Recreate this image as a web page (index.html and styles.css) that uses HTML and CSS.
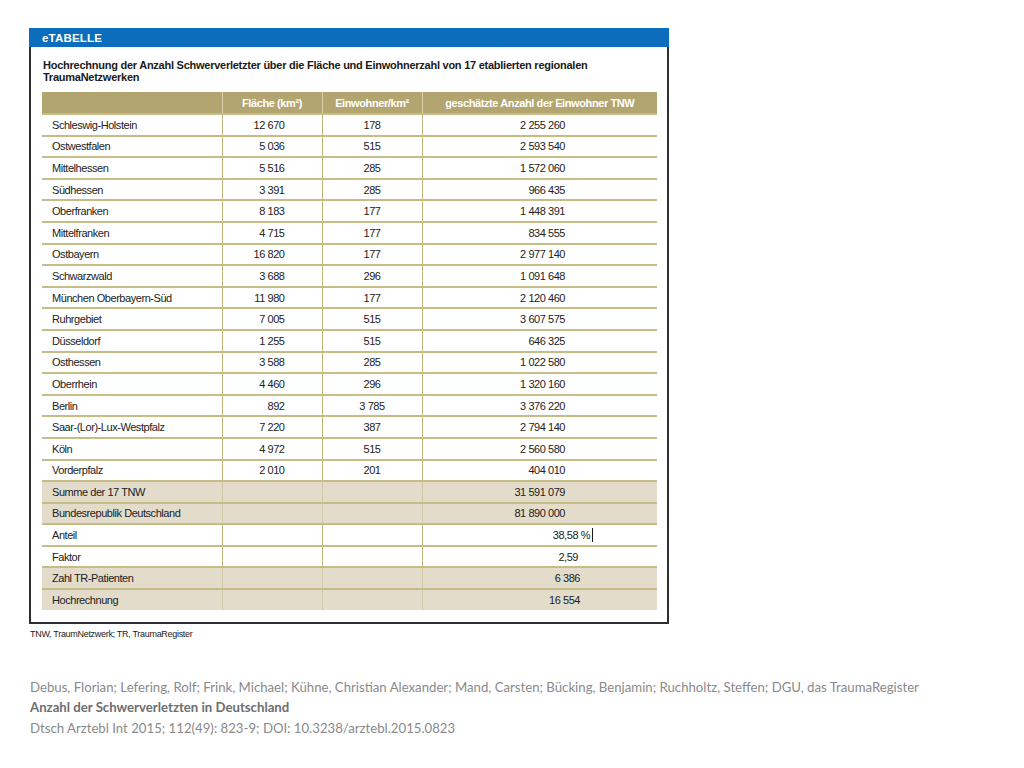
FILE: index.html
```html
<!DOCTYPE html>
<html lang="de">
<head>
<meta charset="utf-8">
<title>eTABELLE</title>
<link rel="stylesheet" href="styles.css">
</head>
<body>
<div class="page">
  <div class="figure">
    <div class="bar">eTABELLE</div>
    <div class="box">
      <h1 class="title">Hochrechnung der Anzahl Schwerverletzter über die Fläche und Einwohnerzahl von 17 etablierten regionalen TraumaNetzwerken</h1>
      <table class="data">
        <colgroup>
          <col class="c1"><col class="c2"><col class="c3"><col class="c4">
        </colgroup>
        <thead>
          <tr><th></th><th>Fläche (km²)</th><th>Einwohner/km²</th><th>geschätzte Anzahl der Einwohner TNW</th></tr>
        </thead>
        <tbody>
          <tr><td>Schleswig-Holstein</td><td class="n">12 670</td><td class="m">178</td><td class="r">2 255 260</td></tr>
          <tr><td>Ostwestfalen</td><td class="n">5 036</td><td class="m">515</td><td class="r">2 593 540</td></tr>
          <tr><td>Mittelhessen</td><td class="n">5 516</td><td class="m">285</td><td class="r">1 572 060</td></tr>
          <tr><td>Südhessen</td><td class="n">3 391</td><td class="m">285</td><td class="r">966 435</td></tr>
          <tr><td>Oberfranken</td><td class="n">8 183</td><td class="m">177</td><td class="r">1 448 391</td></tr>
          <tr><td>Mittelfranken</td><td class="n">4 715</td><td class="m">177</td><td class="r">834 555</td></tr>
          <tr><td>Ostbayern</td><td class="n">16 820</td><td class="m">177</td><td class="r">2 977 140</td></tr>
          <tr><td>Schwarzwald</td><td class="n">3 688</td><td class="m">296</td><td class="r">1 091 648</td></tr>
          <tr><td>München Oberbayern-Süd</td><td class="n">11 980</td><td class="m">177</td><td class="r">2 120 460</td></tr>
          <tr><td>Ruhrgebiet</td><td class="n">7 005</td><td class="m">515</td><td class="r">3 607 575</td></tr>
          <tr><td>Düsseldorf</td><td class="n">1 255</td><td class="m">515</td><td class="r">646 325</td></tr>
          <tr><td>Osthessen</td><td class="n">3 588</td><td class="m">285</td><td class="r">1 022 580</td></tr>
          <tr><td>Oberrhein</td><td class="n">4 460</td><td class="m">296</td><td class="r">1 320 160</td></tr>
          <tr><td>Berlin</td><td class="n">892</td><td class="m">3 785</td><td class="r">3 376 220</td></tr>
          <tr><td>Saar-(Lor)-Lux-Westpfalz</td><td class="n">7 220</td><td class="m">387</td><td class="r">2 794 140</td></tr>
          <tr><td>Köln</td><td class="n">4 972</td><td class="m">515</td><td class="r">2 560 580</td></tr>
          <tr><td>Vorderpfalz</td><td class="n">2 010</td><td class="m">201</td><td class="r">404 010</td></tr>
          <tr class="sum"><td>Summe der 17 TNW</td><td></td><td></td><td class="r">31 591 079</td></tr>
          <tr class="sum"><td>Bundesrepublik Deutschland</td><td></td><td></td><td class="r">81 890 000</td></tr>
          <tr><td>Anteil</td><td></td><td></td><td class="r r2"><span class="caret">38,58 %</span></td></tr>
          <tr><td>Faktor</td><td></td><td></td><td class="r r3">2,59</td></tr>
          <tr class="sum"><td>Zahl TR-Patienten</td><td></td><td></td><td class="r r4">6 386</td></tr>
          <tr class="sum"><td>Hochrechnung</td><td></td><td></td><td class="r r4">16 554</td></tr>
        </tbody>
      </table>
    </div>
    <p class="note">TNW, TraumNetzwerk; TR, TraumaRegister</p>
  </div>
  <div class="cite">
    <p class="authors">Debus, Florian; Lefering, Rolf; Frink, Michael; Kühne, Christian Alexander; Mand, Carsten; Bücking, Benjamin; Ruchholtz, Steffen; DGU, das TraumaRegister</p>
    <p class="ctitle">Anzahl der Schwerverletzten in Deutschland</p>
    <p class="source">Dtsch Arztebl Int 2015; 112(49): 823-9; DOI: 10.3238/arztebl.2015.0823</p>
  </div>
</div>
</body>
</html>
```

FILE: styles.css
```css
html, body {
  margin: 0;
  padding: 0;
  background: #ffffff;
}

.page {
  padding: 28px 0 0 29px;
}

.figure {
  width: 640px;
}

.bar {
  height: 19px;
  background: #0b6dbb;
  color: #ffffff;
  font-family: "Liberation Sans", Arial, sans-serif;
  font-weight: bold;
  font-size: 11.5px;
  line-height: 20px;
  letter-spacing: 0.2px;
  padding-left: 13px;
}

.box {
  border-left: 2px solid #2e2e2e;
  border-right: 2px solid #2e2e2e;
  border-bottom: 2px solid #2e2e2e;
  padding: 12px 10px 12px 11px;
}

.title {
  margin: 0 0 9px 1px;
  font-family: "Liberation Sans", Arial, sans-serif;
  font-weight: bold;
  font-size: 11px;
  line-height: 12px;
  color: #1a1a1a;
  letter-spacing: -0.25px;
  width: 600px;
}

.data {
  width: 615px;
  border-collapse: collapse;
  table-layout: fixed;
  font-family: "Liberation Sans", Arial, sans-serif;
  font-size: 11px;
  letter-spacing: -0.45px;
  color: #222222;
}

.c1 { width: 180px; }
.c2 { width: 100px; }
.c3 { width: 100px; }
.c4 { width: 235px; }

.data th {
  height: 21px;
  background: #b2a56f;
  color: #ffffff;
  font-weight: bold;
  letter-spacing: -0.4px;
  padding: 0;
  text-align: center;
  border-left: 1px solid #d8d0ae;
}

.data th:first-child {
  border-left: none;
}

.data td {
  height: 19.6px;
  padding: 0;
  border-top: 2px solid #c6bc86;
  border-left: 1px solid #bfb47a;
  white-space: nowrap;
}

.data td:first-child {
  border-left: none;
  padding-left: 10px;
}

.data td.n {
  text-align: right;
  padding-right: 37px;
}

.data td.m {
  text-align: center;
}

.data td.r {
  text-align: right;
  padding-right: 92px;
}

.data td.r2 {
  padding-right: 64px;
}

.data td.r3 {
  padding-right: 79px;
}

.data td.r4 {
  padding-right: 77px;
}

.data tr.sum td {
  background: #e3dccb;
  border-left-color: #d2c9a6;
}

.data tr.sum td:first-child {
  border-left: none;
}

.caret {
  display: inline-block;
  padding-right: 2px;
  border-right: 1px solid #1a1a1a;
  line-height: 14px;
}

.note {
  margin: 4px 0 0 1px;
  font-family: "Liberation Sans", Arial, sans-serif;
  font-size: 9px;
  letter-spacing: -0.3px;
  color: #222;
  line-height: 12px;
}

.cite {
  margin-top: 37px;
  padding-left: 1px;
  font-family: Lato, "Open Sans", sans-serif;
  font-size: 13.2px;
  line-height: 20.5px;
  color: #8a8a8a;
}

.cite p {
  margin: 0;
}

.cite .ctitle {
  font-weight: bold;
  color: #6e6e6e;
}
```
